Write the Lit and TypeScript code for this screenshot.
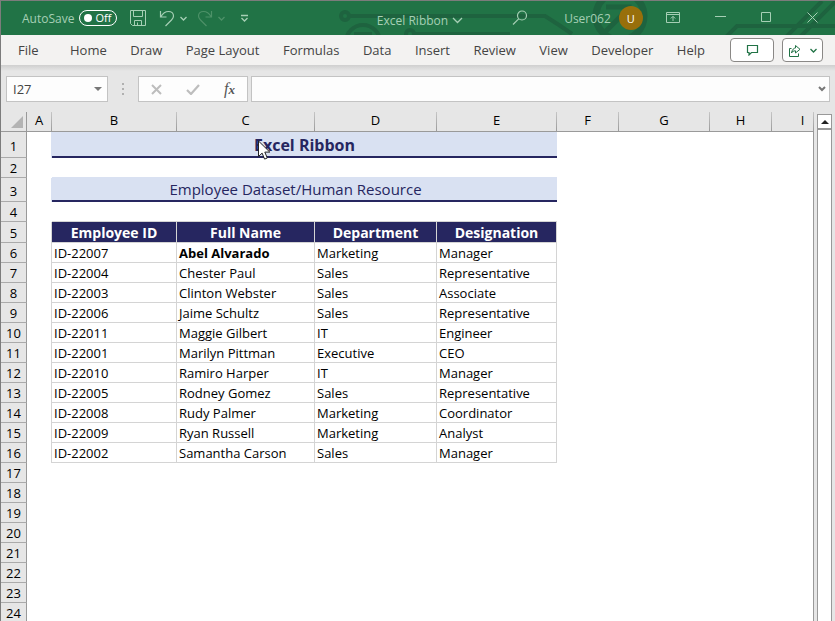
import { LitElement, html, svg, css, nothing } from "lit";
import { customElement, property, state } from "lit/decorators.js";
import { classMap } from "lit/directives/class-map.js";

const TABS = ["File", "Home", "Draw", "Page Layout", "Formulas", "Data", "Insert", "Review", "View", "Developer", "Help"];
const COLUMNS = ["A", "B", "C", "D", "E", "F", "G", "H", "I"];
const FIELDS = ["Employee ID", "Full Name", "Department", "Designation"];
const EMPLOYEES = [
  ["ID-22007", "Abel Alvarado", "Marketing", "Manager"],
  ["ID-22004", "Chester Paul", "Sales", "Representative"],
  ["ID-22003", "Clinton Webster", "Sales", "Associate"],
  ["ID-22006", "Jaime Schultz", "Sales", "Representative"],
  ["ID-22011", "Maggie Gilbert", "IT", "Engineer"],
  ["ID-22001", "Marilyn Pittman", "Executive", "CEO"],
  ["ID-22010", "Ramiro Harper", "IT", "Manager"],
  ["ID-22005", "Rodney Gomez", "Sales", "Representative"],
  ["ID-22008", "Rudy Palmer", "Marketing", "Coordinator"],
  ["ID-22009", "Ryan Russell", "Marketing", "Analyst"],
  ["ID-22002", "Samantha Carson", "Sales", "Manager"],
];
const FIRST_DATA_ROW = 6;
const LAST_ROW = 24;

const icon = (w: number, h: number, body: unknown) =>
  html`<svg width=${w} height=${h} viewBox="0 0 ${w} ${h}" fill="none" stroke="currentColor" aria-hidden="true">${body}</svg>`;

const icons = {
  save: icon(18, 18, svg`<path d="M1.5 1.5h15v15h-13l-2-2zM4.500 1.500v6h9v-6M5.500 16.500v-5h7v5M8.500 16v-2.500"/>`),
  undo: icon(16, 18, svg`<path d="M1.500 2v6h6M2 7.500C4 4 7 2.500 9.500 2.500c3 0 5 2 5 4.500 0 2-1 3-2 4l-6 6" stroke-width="1.200"/>`),
  redo: icon(16, 18, svg`<path d="M14.500 2v6h-6M14 7.500C12 4 9 2.500 6.500 2.500c-3 0-5 2-5 4.500 0 2 1 3 2 4l6 6" stroke-width="1.200"/>`),
  caret: icon(7, 5, svg`<path d="M.5 1l3 3 3-3" stroke-width="1.300"/>`),
  more: icon(9, 8, svg`<path d="M1 1.500h7M1.500 4l3 3 3-3" stroke-width="1.300"/>`),
  chevron: icon(11, 7, svg`<path d="M1 1l4.500 4.500L10 1" stroke-width="1.300"/>`),
  search: icon(16, 16, svg`<circle cx="10" cy="5.500" r="4.500" stroke-width="1.200"/><path d="M6.700 8.800L1 14.500" stroke-width="1.200"/>`),
  ribbon: icon(14, 11, svg`<path d="M.5.5h13v10H.5zM.5 2.500h13M7 9V4.500M4.800 6.500L7 4.300l2.200 2.200"/>`),
  minimize: icon(11, 11, svg`<path d="M0 4.500h11"/>`),
  maximize: icon(11, 11, svg`<path d="M.5.500h9v9h-9z"/>`),
  close: icon(11, 11, svg`<path d="M.5.500l10 10M10.500.500l-10 10"/>`),
  comment: icon(13, 12, svg`<path d="M1.500 1.500h10v7h-6l-2.500 2.500v-2.500h-1.500z" stroke-width="1.200"/>`),
  share: icon(13, 13, svg`<path d="M3.500 4.500h-2v8h9v-3M3.500 9c.5-3.500 2.500-5 4-5V1.500L12 5.300 7.500 9V6.800c-2 0-3.500.7-4 2.200z"/>`),
  cancel: icon(11, 11, svg`<path d="M1 1l9 9M10 1l-9 9" stroke-width="2"/>`),
  enter: icon(14, 11, svg`<path d="M1 6l4 4 8-9" stroke-width="2.200"/>`),
  expand: icon(8, 6, svg`<path d="M1 1l3 3 3-3" stroke-width="2"/>`),
};

@customElement("title-bar")
export class TitleBar extends LitElement {
  @state() autoSave = false;

  static styles = css`
    :host { position: relative; display: flex; align-items: center; height: 34px; background: #217346; color: #a6cfb5; font-size: 12px; overflow: hidden; }
    .art { position: absolute; top: 0; right: 0; color: #1e633f; }
    .group { position: relative; display: flex; align-items: center; }
    .left { flex: 1; padding-left: 21px; }
    .right { flex: 1; padding-right: 17px; }
    .switch { display: flex; align-items: center; gap: 5px; }
    .track { position: relative; display: grid; }
    .track input { appearance: none; width: 38px; height: 16px; margin: 0; border: 1px solid #fff; border-radius: 8px; }
    .track input::before { content: ""; display: block; width: 8px; height: 8px; margin: 3px 4px; border-radius: 50%; background: #fff; }
    .track input:checked::before { margin-left: 24px; }
    .off { position: absolute; right: 6px; top: 0; line-height: 16px; font-size: 11px; color: #fff; pointer-events: none; }
    button { display: flex; align-items: center; padding: 0; border: 0; background: none; color: inherit; font: inherit; }
    .save { margin-left: 12px; }
    .undo { margin-left: 12px; gap: 5px; }
    .redo { margin-left: 10px; gap: 5px; color: #4d9168; }
    .more { margin-left: 15px; }
    .name { gap: 4px; padding-top: 4px; }
    .search { margin-left: 49px; }
    .user { margin-left: 36px; gap: 8px; }
    .avatar { display: grid; place-items: center; width: 24px; height: 24px; border-radius: 50%; background: #986f0b; color: #fff; font-size: 11px; }
    .window { display: flex; gap: 35px; margin-left: auto; padding-bottom: 2px; }
  `;

  render() {
    return html`
      <svg class="art" width="505" height="34" viewBox="330 1 505 34" fill="none" stroke="currentColor" stroke-width="4" aria-hidden="true">
        <circle cx="345" cy="16" r="4"/><path d="M350 16H545l14 9 13 9"/>
        <circle cx="363" cy="42" r="17"/><path d="M354 34h18"/>
        <circle cx="410" cy="34" r="4"/><path d="M415 34h95"/>
        <circle cx="620" cy="16" r="24" stroke-width="7"/><path d="M606 31l20-20M606 7h23v23" stroke-width="5"/>
        <path d="M726 37l11-11h98M786 37l36-36M800 37l36-36"/>
      </svg>
      <div class="group left">
        <label class="switch">AutoSave
          <span class="track">
            <input type="checkbox" role="switch" .checked=${this.autoSave}
              @change=${(e: Event) => (this.autoSave = (e.target as HTMLInputElement).checked)}>
            <span class="off">${this.autoSave ? nothing : "Off"}</span>
          </span>
        </label>
        <button class="save" aria-label="Save">${icons.save}</button>
        <button class="undo" aria-label="Undo">${icons.undo}${icons.caret}</button>
        <button class="redo" aria-label="Redo" disabled>${icons.redo}${icons.caret}</button>
        <button class="more" aria-label="Customize toolbar">${icons.more}</button>
      </div>
      <div class="group">
        <button class="name">Excel Ribbon ${icons.chevron}</button>
      </div>
      <div class="group right">
        <button class="search" aria-label="Search">${icons.search}</button>
        <button class="user">User062 <span class="avatar">U</span></button>
        <div class="window">
          <button aria-label="Ribbon display options">${icons.ribbon}</button>
          <button aria-label="Minimize">${icons.minimize}</button>
          <button aria-label="Maximize">${icons.maximize}</button>
          <button aria-label="Close">${icons.close}</button>
        </div>
      </div>`;
  }
}

@customElement("ribbon-tabs")
export class RibbonTabs extends LitElement {
  static styles = css`
    :host { display: flex; align-items: center; justify-content: space-between; height: 30px; padding: 0 12px 0 17px; background: #f3f2f1; color: #444; font-size: 13px; }
    nav { display: flex; flex: 1; justify-content: space-between; max-width: 687px; }
    a { color: inherit; text-decoration: none; line-height: 20px; }
    a:first-child { margin-right: 8px; }
    .actions { display: flex; gap: 8px; }
    button { display: flex; align-items: center; justify-content: center; gap: 9px; height: 24px; padding: 0; border: 1px solid #8a8886; border-radius: 4px; background: #fff; color: #217346; }
    .comment { width: 44px; }
    .share { width: 41px; }
  `;

  render() {
    return html`
      <nav>${TABS.map((tab) => html`<a href="#">${tab}</a>`)}</nav>
      <div class="actions">
        <button class="comment" aria-label="Comments">${icons.comment}</button>
        <button class="share" aria-label="Share">${icons.share}${icons.caret}</button>
      </div>`;
  }
}

@customElement("formula-bar")
export class FormulaBar extends LitElement {
  @property() cell = "";

  static styles = css`
    :host { display: flex; height: 26px; padding: 11px 5px 10px; background: linear-gradient(#cfcfcf, #e6e6e6 6px); color: #777; }
    .box { box-sizing: border-box; display: flex; align-items: center; border: 1px solid #c3c3c3; background: #fdfdfd; }
    .name { width: 102px; padding: 0 5px 0 6px; }
    input { flex: 1; min-width: 0; padding: 0; border: 0; outline: 0; background: none; color: #444; font: inherit; font-size: 13px; }
    button { display: grid; place-items: center; padding: 0; border: 0; background: none; color: inherit; }
    .down { width: 0; border: 4px solid transparent; border-top-color: #777; border-bottom: 0; }
    .grip { display: grid; align-content: center; gap: 3px; width: 30px; justify-content: center; }
    .grip i { width: 2px; height: 2px; background: #b0b0b0; }
    .tools { width: 110px; justify-content: space-between; padding: 0 12px; color: #bdbdbd; }
    .fx { display: block; color: #555; font: italic 16px/20px "Liberation Serif", serif; }
    .fx small { font-size: 13px; font-weight: 700; }
    .formula { flex: 1; margin-left: 3px; padding: 0 3px 0 6px; }
  `;

  render() {
    return html`
      <div class="box name">
        <input aria-label="Name box" .value=${this.cell}>
        <button aria-label="Named ranges"><span class="down"></span></button>
      </div>
      <div class="grip"><i></i><i></i><i></i></div>
      <div class="box tools">
        <button aria-label="Cancel">${icons.cancel}</button>
        <button aria-label="Enter">${icons.enter}</button>
        <button class="fx" aria-label="Insert function">f<small>x</small></button>
      </div>
      <div class="box formula">
        <input aria-label="Formula">
        <button aria-label="Expand formula bar">${icons.expand}</button>
      </div>`;
  }
}

@customElement("work-sheet")
export class WorkSheet extends LitElement {
  static styles = css`
    :host { position: relative; display: flex; flex: 1; min-height: 0; overflow: hidden; background: #e6e6e6; }
    .pane { flex: 1; min-width: 0; }
    table { width: 100%; table-layout: fixed; border-collapse: separate; border-spacing: 0; font-size: 13px; line-height: 18px; color: #000; }
    th, td { box-sizing: border-box; height: 20px; padding: 0; white-space: nowrap; }
    th { font-weight: 400; }
    tbody tr { background: #fff; }
    tbody td:last-child { border-right: 1px solid #999; }
    .head-col { width: 26px; }
    .col-a { width: 25px; }
    .col-b { width: 125px; }
    .col-c { width: 138px; }
    .col-d { width: 122px; }
    .col-e { width: 120px; }
    .col-f { width: 62px; }
    .col-g { width: 91px; }
    .col-h { width: 62px; }
    .letter { line-height: 17px; padding-bottom: 2px; border-bottom: 1px solid #999; border-right: 1px solid; border-image: linear-gradient(#c8c8c8, #999) 1; }
    .letter:last-child { padding-left: 20px; border-right-color: transparent; }
    .corner { border-bottom: 1px solid #999; border-right: 1px solid #999; }
    .corner span { display: block; width: 0; margin-left: 10px; border: 6px solid transparent; border-right-color: #b3b3b3; border-bottom-color: #b3b3b3; }
    .number { background: #e6e6e6; border-right: 1px solid #999; border-bottom: 1px solid #aaa; }
    .r1 > * { height: 26px; }
    .r3 > * { height: 24px; }
    .r5 > * { height: 21px; }
    .r1 .number, .r3 .number { padding-top: 3px; }
    .r5 th { padding-top: 2px; }
    .banner { background: #d9e1f2; border-bottom: 2px solid #262660; color: #262660; text-align: center; }
    .r1 .banner { font-size: 16px; font-weight: 700; padding-top: 2px; }
    .r3 .banner { font-size: 15px; padding-right: 18px; }
    .edge-banner { border-right: 1px solid #d9e1f2; }
    .over-banner { border-bottom: 1px solid #d9e1f2; }
    .edge { border-right: 1px solid #d4d4d4; }
    .over { border-bottom: 1px solid #d4d4d4; }
    .field { border-right: 1px solid #d4d4d4; border-bottom: 1px solid #d4d4d4; background: #262660; color: #fff; font-weight: 700; font-size: 14px; }
    .value { border-right: 1px solid #d4d4d4; border-bottom: 1px solid #d4d4d4; padding-left: 2px; }
    .strong { font-weight: 700; }
    .scroll { display: flex; flex-direction: column; width: 15px; margin: 2px 3px 0 3px; }
    .scroll button { display: grid; place-items: center; box-sizing: border-box; height: 15px; padding: 0; border: 1px solid #999; background: #fff; }
    .up { border: 4px solid transparent; border-bottom-color: #222; border-top: 0; }
    .thumb { flex: 1; border: 1px solid #999; border-bottom: 0; background: #fff; }
    .pointer { position: absolute; left: 256px; top: 28px; }
  `;

  private cells(row: number) {
    if (row === 1 || row === 3) {
      const text = row === 1 ? "Excel Ribbon" : "Employee Dataset/Human Resource";
      return html`<td class="edge-banner"></td><td class="banner" colspan="4">${text}</td><td></td><td></td><td></td><td></td>`;
    }
    if (row === 5) {
      return html`<td class="edge"></td>${FIELDS.map((f) => html`<th class="field" scope="col">${f}</th>`)}<td></td><td></td><td></td><td></td>`;
    }
    const person = EMPLOYEES[row - FIRST_DATA_ROW];
    if (person) {
      return html`<td class="edge"></td>${person.map(
        (v, i) => html`<td class=${classMap({ value: true, strong: row === FIRST_DATA_ROW && i === 1 })}>${v}</td>`,
      )}<td></td><td></td><td></td><td></td>`;
    }
    const inner = classMap({ "over-banner": row === 2, over: row === 4 });
    return COLUMNS.map((c) => html`<td class=${"BCDE".includes(c) ? inner : ""}></td>`);
  }

  render() {
    const rows = Array.from({ length: LAST_ROW }, (_, i) => i + 1);
    return html`
      <div class="pane">
        <table>
          <colgroup>
            <col class="head-col">${COLUMNS.map((c) => html`<col class="col-${c.toLowerCase()}">`)}
          </colgroup>
          <thead>
            <tr><td class="corner"><span></span></td>${COLUMNS.map((c) => html`<th class="letter" scope="col">${c}</th>`)}</tr>
          </thead>
          <tbody>
            ${rows.map((r) => html`<tr class="r${r}"><th class="number" scope="row">${r}</th>${this.cells(r)}</tr>`)}
          </tbody>
        </table>
      </div>
      <div class="scroll">
        <button aria-label="Scroll up"><span class="up"></span></button>
        <div class="thumb"></div>
      </div>
      <svg class="pointer" width="14" height="21" viewBox="0 0 14 21" aria-hidden="true">
        <path d="M1.500 1v15.500l3.600-3.400 2.500 6 2.700-1.100-2.500-5.900h5z" fill="#fff" stroke="#222"/>
      </svg>`;
  }
}

@customElement("app-root")
export class AppRoot extends LitElement {
  static styles = css`
    :host { box-sizing: border-box; display: flex; flex-direction: column; height: 100vh; overflow: hidden; border-top: 1px solid #7c7c7c; border-left: 1px solid #7c7c7c; background: #e6e6e6; font-family: "Open Sans", "Noto Sans", sans-serif; }
    title-bar, ribbon-tabs, formula-bar { flex: none; }
  `;

  render() {
    return html`
      <title-bar></title-bar>
      <ribbon-tabs></ribbon-tabs>
      <formula-bar cell="I27"></formula-bar>
      <work-sheet></work-sheet>`;
  }
}
